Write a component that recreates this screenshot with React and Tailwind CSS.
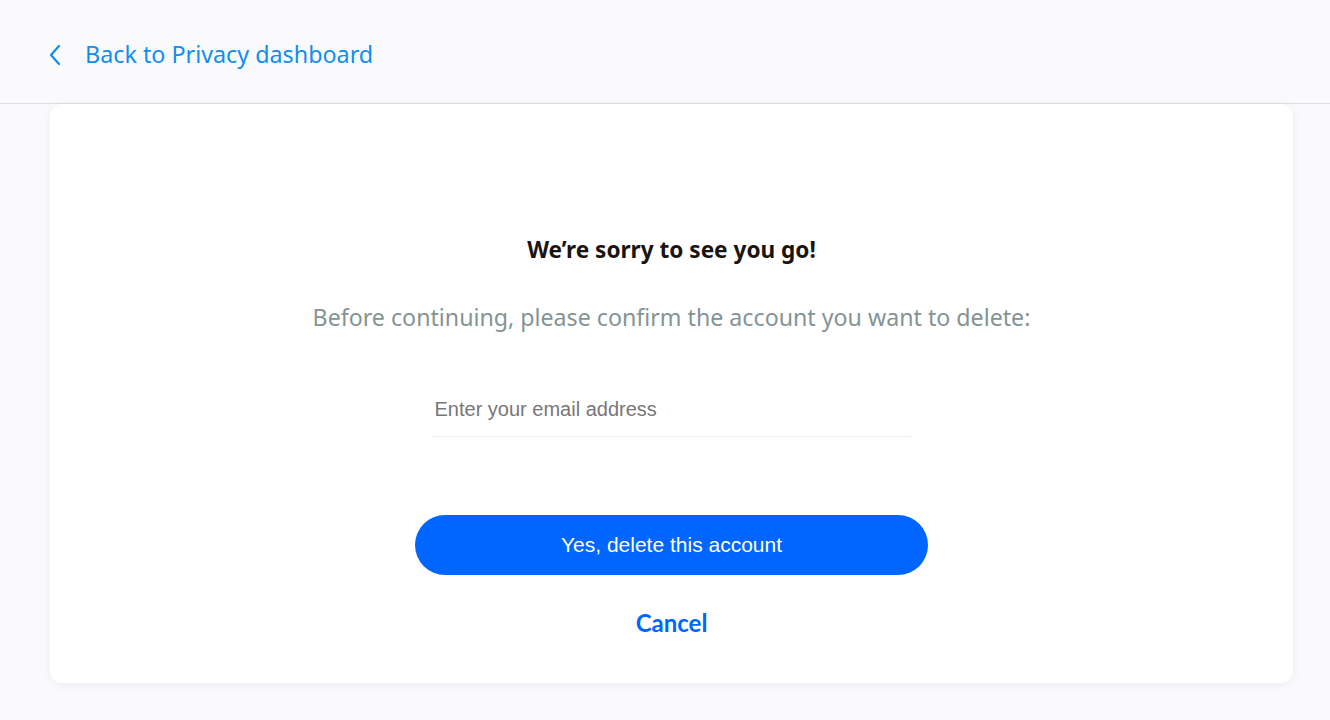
import React from "react";

export default function App() {
  return (
    <div className="min-h-[720px] w-full bg-[#fafafd]">
      <header className="h-[104px] border-b border-[#dcdce4] flex items-center pl-[46px] pt-[6px]">
        <a className="flex items-center text-[#118ef0] text-[23.3px] font-['Noto_Sans',sans-serif] cursor-pointer">
          <svg width="20" height="24" viewBox="0 0 20 24" fill="none" className="mr-[19px]">
            <path d="M13 3 L5 12 L13 21" stroke="#118ef0" strokeWidth="2.2" strokeLinecap="round" strokeLinejoin="round" />
          </svg>
          <span>Back to Privacy dashboard</span>
        </a>
      </header>
      <main className="pl-[50px] pr-[37px] pb-[37px]">
        <div className="bg-white rounded-[12px] shadow-[0_2px_8px_rgba(40,30,80,0.06)] h-[579px] flex flex-col items-center">
          <h1 className="mt-[131px] text-[22.6px] leading-[30px] font-bold text-[#1a1410] font-['Noto_Sans',sans-serif]">We’re sorry to see you go!</h1>
          <p className="mt-[37px] text-[23.2px] leading-[30px] text-[#849494] font-['Noto_Sans',sans-serif]">Before continuing, please confirm the account you want to delete:</p>
          <div className="mt-[63px] w-[478px] border-b border-[#eeeeee] pb-[14px] pt-[2px]">
            <input
              type="email"
              placeholder="Enter your email address"
              className="w-full pl-[2px] text-[20px] leading-[24px] font-['Liberation_Sans',Arial,sans-serif] text-[#333] placeholder:text-[#777] outline-none bg-transparent"
            />
          </div>
          <button className="mt-[78px] w-[513px] h-[60px] rounded-full bg-[#0066ff] text-white text-[21px] font-['Liberation_Sans',Arial,sans-serif]">
            Yes, delete this account
          </button>
          <button className="mt-[33px] text-[24px] leading-[30px] font-bold text-[#0066ff] font-['Lato',sans-serif]">Cancel</button>
        </div>
      </main>
    </div>
  );
}
